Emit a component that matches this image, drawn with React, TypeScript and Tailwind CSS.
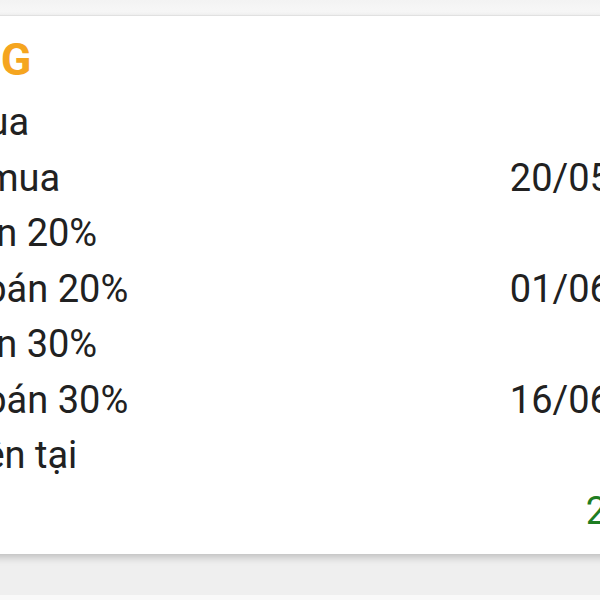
export default function App() {
  const rows = [
    { label: "Giá mua", value: "21,50" },
    { label: "Ngày mua", value: "20/05/2024" },
    { label: "Giá bán 20%", value: "25,80" },
    { label: "Ngày bán 20%", value: "01/06/2024" },
    { label: "Giá bán 30%", value: "27,95" },
    { label: "Ngày bán 30%", value: "16/06/2024" },
    { label: "Giá hiện tại", value: "27,20" },
  ];

  return (
    <div
      className="h-[600px] w-[600px] overflow-hidden bg-[#efefef]"
      style={{ fontFamily: "Roboto, 'Noto Sans', sans-serif" }}
    >
      <div className="h-[16px] bg-gradient-to-b from-[#f3f3f3] to-[#f8f8f8] border-b border-[#ececec]" />
      <div className="ml-[-127px] w-[855px] bg-white px-4 pt-[17px] pb-[15px] shadow-[0_3px_8px_rgba(0,0,0,0.22)]">
        <h2 className="pl-[51px] text-[45px] font-bold leading-[54px] text-[#f5a51f]">HPG</h2>
        <div className="mt-[8px] flex flex-col text-[38px] leading-[55.5px] text-[#212121]">
          {rows.map((r) => (
            <div key={r.label} className="flex justify-between">
              <span>{r.label}</span>
              <span>{r.value}</span>
            </div>
          ))}
          <div className="flex justify-between">
            <span>Lãi</span>
            <span className="pr-[3px] text-[#1e7d22]">26.85%</span>
          </div>
        </div>
      </div>
      <div className="mt-[41px] h-[10px] bg-[#f9f9f9]" />
    </div>
  );
}
